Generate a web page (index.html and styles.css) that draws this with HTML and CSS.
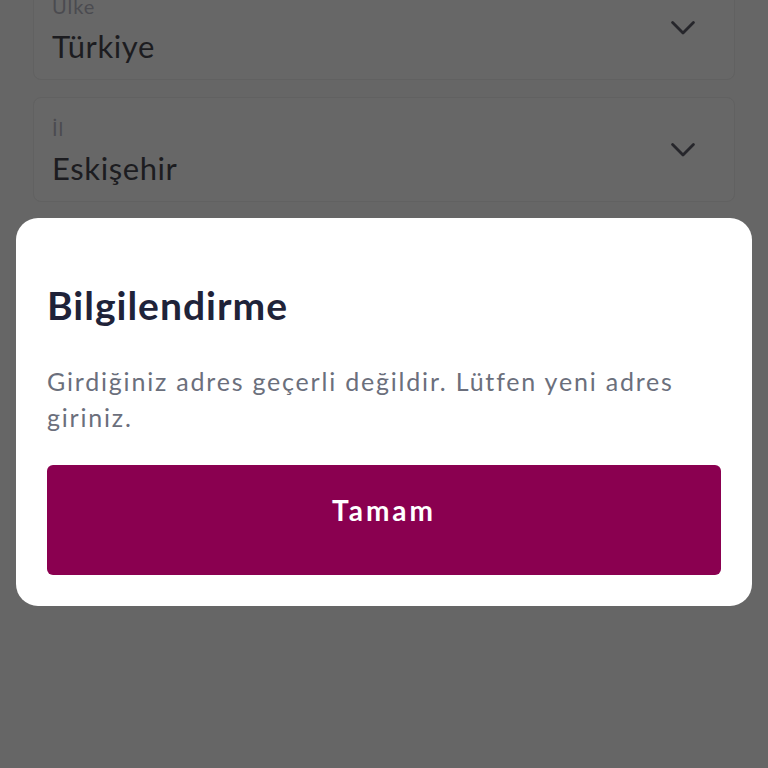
FILE: index.html
```html
<!DOCTYPE html>
<html lang="tr">
<head>
<meta charset="utf-8">
<link rel="stylesheet" href="styles.css">
</head>
<body>
<div class="page">
  <div class="form">
    <div class="field">
      <div class="field-text">
        <div class="label">Ülke</div>
        <div class="value">Türkiye</div>
      </div>
      <svg class="chev" viewBox="0 0 24 14" width="24" height="14"><path d="M1.6 1.6 L12 12 L22.4 1.6" fill="none" stroke="#26262b" stroke-width="2.8" stroke-linecap="round" stroke-linejoin="round"/></svg>
    </div>
    <div class="field">
      <div class="field-text">
        <div class="label">İl</div>
        <div class="value">Eskişehir</div>
      </div>
      <svg class="chev" viewBox="0 0 24 14" width="24" height="14"><path d="M1.6 1.6 L12 12 L22.4 1.6" fill="none" stroke="#26262b" stroke-width="2.8" stroke-linecap="round" stroke-linejoin="round"/></svg>
    </div>
  </div>
  <div class="modal">
    <h2 class="title">Bilgilendirme</h2>
    <p class="message">Girdiğiniz adres geçerli değildir. Lütfen yeni adres giriniz.</p>
    <button class="btn">Tamam</button>
  </div>
</div>
</body>
</html>
```

FILE: styles.css
```css
html, body {
  margin: 0;
  padding: 0;
  background: #666666;
  font-family: "Lato", "Noto Sans", sans-serif;
}
.page {
  width: 768px;
  height: 768px;
  overflow: hidden;
  position: relative;
}
.form {
  display: flex;
  flex-direction: column;
  gap: 17px;
  padding: 0 33px;
  margin-top: -25px;
}
.field {
  display: flex;
  align-items: center;
  justify-content: space-between;
  height: 105px;
  border: 1px solid #616161;
  border-radius: 8px;
  background: #676767;
  padding: 0 39px 0 18px;
  box-sizing: border-box;
}
.field-text {
  align-self: flex-start;
  display: flex;
  flex-direction: column;
  padding-top: 18px;
}
.label {
  font-size: 20px;
  color: #4b4b50;
  line-height: 24px;
  letter-spacing: 1px;
}
.value {
  font-size: 31px;
  color: #1c1c20;
  line-height: 40px;
  margin-top: 8px;
  letter-spacing: 0.6px;
}
.chev {
  display: block;
}
.modal {
  position: absolute;
  left: 16px;
  top: 218px;
  width: 736px;
  box-sizing: border-box;
  background: #ffffff;
  border-radius: 22px;
  padding: 63px 31px 31px;
}
.title {
  margin: 0;
  font-size: 39px;
  font-weight: 700;
  color: #1f2339;
  line-height: 48px;
  letter-spacing: 1px;
}
.message {
  margin: 34px 0 0;
  font-size: 25px;
  line-height: 36px;
  color: #6b6f7c;
  letter-spacing: 1.8px;
}
.btn {
  display: block;
  width: 100%;
  height: 110px;
  margin-top: 30px;
  padding: 0 0 20px;
  border: none;
  border-radius: 6px;
  background: #8a0050;
  color: #ffffff;
  font-family: inherit;
  font-size: 28px;
  font-weight: 700;
  letter-spacing: 3px;
}
```
